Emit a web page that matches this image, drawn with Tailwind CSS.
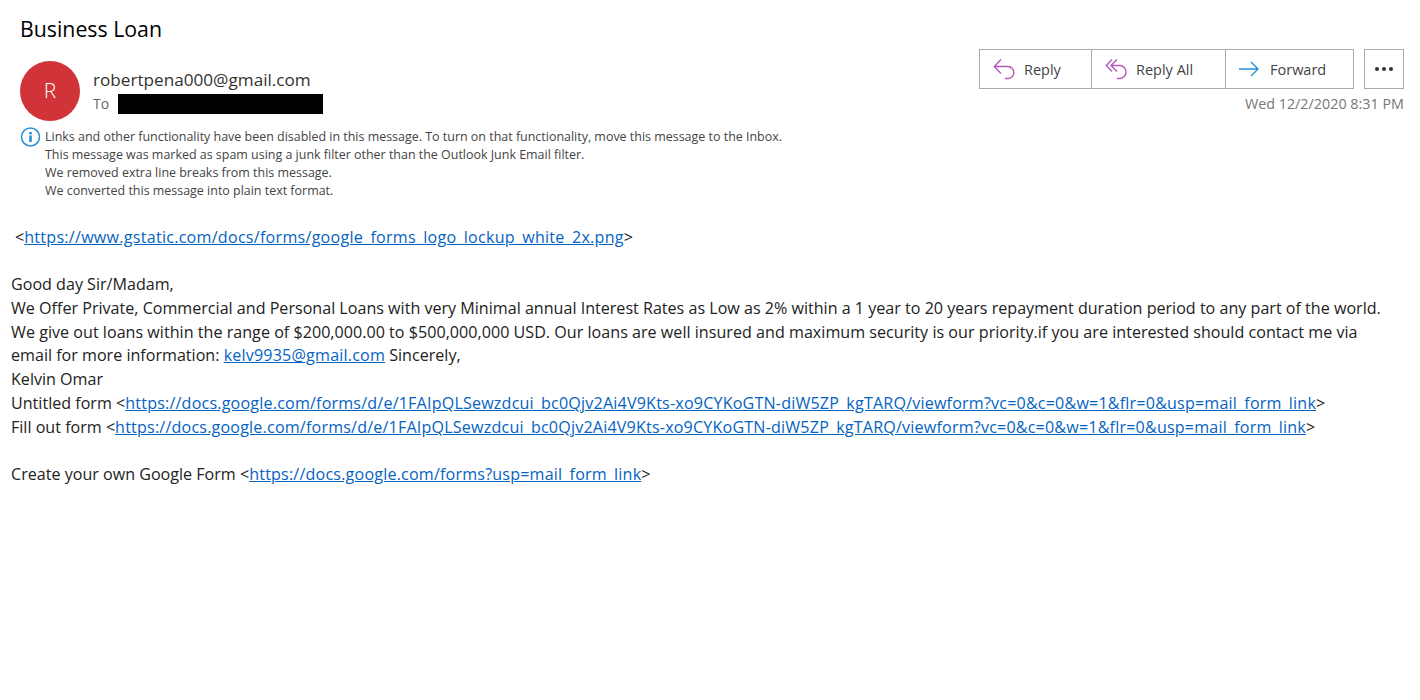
<!DOCTYPE html>
<html><head><meta charset="utf-8"><script src="https://cdn.jsdelivr.net/npm/@tailwindcss/browser@4"></script></head>
<body class="bg-white font-['Open_Sans','Noto_Sans',sans-serif] w-[1420px] h-[700px] overflow-hidden">
<div class="pt-[14px] pl-5 pr-4">
  <h1 class="text-[21.3px] leading-[30px] text-black font-normal">Business Loan</h1>
  <div class="flex justify-between mt-[5px]">
    <div class="flex mt-[10px]">
      <div class="w-[60px] h-[60px] mt-[2px] rounded-full bg-[#d13438] text-white flex items-center justify-center text-[21px] font-light">R</div>
      <div class="ml-[13px] pt-[9px]">
        <div class="text-[17.15px] leading-[24px] text-[#333]">robertpena000@gmail.com</div>
        <div class="flex items-center h-5 mt-[2px]"><span class="text-[14px] text-[#666] w-[25px] -mt-[1px]">To</span><div class="w-[205px] h-5 bg-black"></div></div>
      </div>
    </div>
    <div class="flex flex-col items-end">
      <div class="flex gap-[10px]">
        <div class="flex h-10 border border-[#aaa] text-[14.5px] text-[#444]">
          <div class="w-[112px] flex items-center pl-[13px] border-r border-[#aaa] gap-[9px]">
            <svg class="w-[22px] h-[22px]" viewBox="0 0 22 22" fill="none" stroke="#b35ab8" stroke-width="1.4"><path d="M8 1.5 1.3 8.5 8 15.5M1.3 8.5H15a5.8 6 0 0 1 0 12h-3"/></svg><span class="pt-[2px]">Reply</span></div>
          <div class="w-[134px] flex items-center pl-[13px] border-r border-[#aaa] gap-[9px]">
            <svg class="w-[22px] h-[22px]" viewBox="0 0 22 22" fill="none" stroke="#b35ab8" stroke-width="1.4"><path d="M7 1.5 1.3 7.5 7 13.5M12 1.5 6 7.5l6 6M6 7.5H15a6 6.5 0 0 1 0 13h-3"/></svg><span class="pt-[2px]">Reply All</span></div>
          <div class="w-[127px] flex items-center pl-[13px] gap-[11px]">
            <svg class="w-[20px] h-[20px]" viewBox="0 0 20 20" fill="none" stroke="#2b8fd8" stroke-width="1.4"><path d="M0 10h19M12 3l7 7-7 7"/></svg><span class="pt-[2px]">Forward</span></div>
        </div>
        <div class="w-10 h-10 border border-[#aaa] flex items-center justify-center gap-[3px]">
          <span class="w-[4px] h-[4px] rounded-full bg-[#333]"></span><span class="w-[4px] h-[4px] rounded-full bg-[#333]"></span><span class="w-[4px] h-[4px] rounded-full bg-[#333]"></span>
        </div>
      </div>
      <div class="text-[14.35px] leading-5 text-[#777] mt-[5px]">Wed 12/2/2020 8:31 PM</div>
    </div>
  </div>
  <div class="flex mt-[7px]">
    <svg class="w-5 h-5 mt-[-1px] mr-[5px] shrink-0" viewBox="0 0 20 20"><circle cx="10.5" cy="10" r="9" fill="none" stroke="#2b8fd8" stroke-width="1.5"/><rect x="9.2" y="8.5" width="2.6" height="6.5" fill="#2b8fd8"/><rect x="9.2" y="5" width="2.6" height="2.4" fill="#2b8fd8"/></svg>
    <div class="text-[12.46px] leading-[18px] text-[#444] whitespace-nowrap">
      <div>Links and other functionality have been disabled in this message. To turn on that functionality, move this message to the Inbox.</div>
      <div>This message was marked as spam using a junk filter other than the Outlook Junk Email filter.</div>
      <div>We removed extra line breaks from this message.</div>
      <div>We converted this message into plain text format.</div>
    </div>
  </div>
</div>
<div class="pl-[11px] mt-[26px] text-[16.1px] leading-[23.8px] text-[#222] whitespace-nowrap [&_a]:text-[#0563c1] [&_a]:underline [&_a]:tracking-[0.185px]">
  <div class="pl-[4px]">&lt;<a class="tracking-[0.255px]!">https://www.gstatic.com/docs/forms/google_forms_logo_lockup_white_2x.png</a>&gt;</div>
  <div class="h-[23.3px]"></div>
  <div>Good day Sir/Madam,</div>
  <div>We Offer Private, Commercial and Personal Loans with very Minimal annual Interest Rates as Low as 2% within a 1 year to 20 years repayment duration period to any part of the world.</div>
  <div class="tracking-[0.02px]">We give out loans within the range of $200,000.00 to $500,000,000 USD. Our loans are well insured and maximum security is our priority.if you are interested should contact me via</div>
  <div>email for more information: <a>kelv9935@gmail.com</a> Sincerely,</div>
  <div>Kelvin Omar</div>
  <div>Untitled form &lt;<a>https://docs.google.com/forms/d/e/1FAIpQLSewzdcui_bc0Qjv2Ai4V9Kts-xo9CYKoGTN-diW5ZP_kgTARQ/viewform?vc=0&amp;c=0&amp;w=1&amp;flr=0&amp;usp=mail_form_link</a>&gt;</div>
  <div>Fill out form &lt;<a>https://docs.google.com/forms/d/e/1FAIpQLSewzdcui_bc0Qjv2Ai4V9Kts-xo9CYKoGTN-diW5ZP_kgTARQ/viewform?vc=0&amp;c=0&amp;w=1&amp;flr=0&amp;usp=mail_form_link</a>&gt;</div>
  <div class="h-[23.5px]"></div>
  <div>Create your own Google Form &lt;<a>https://docs.google.com/forms?usp=mail_form_link</a>&gt;</div>
</div>
</body></html>
